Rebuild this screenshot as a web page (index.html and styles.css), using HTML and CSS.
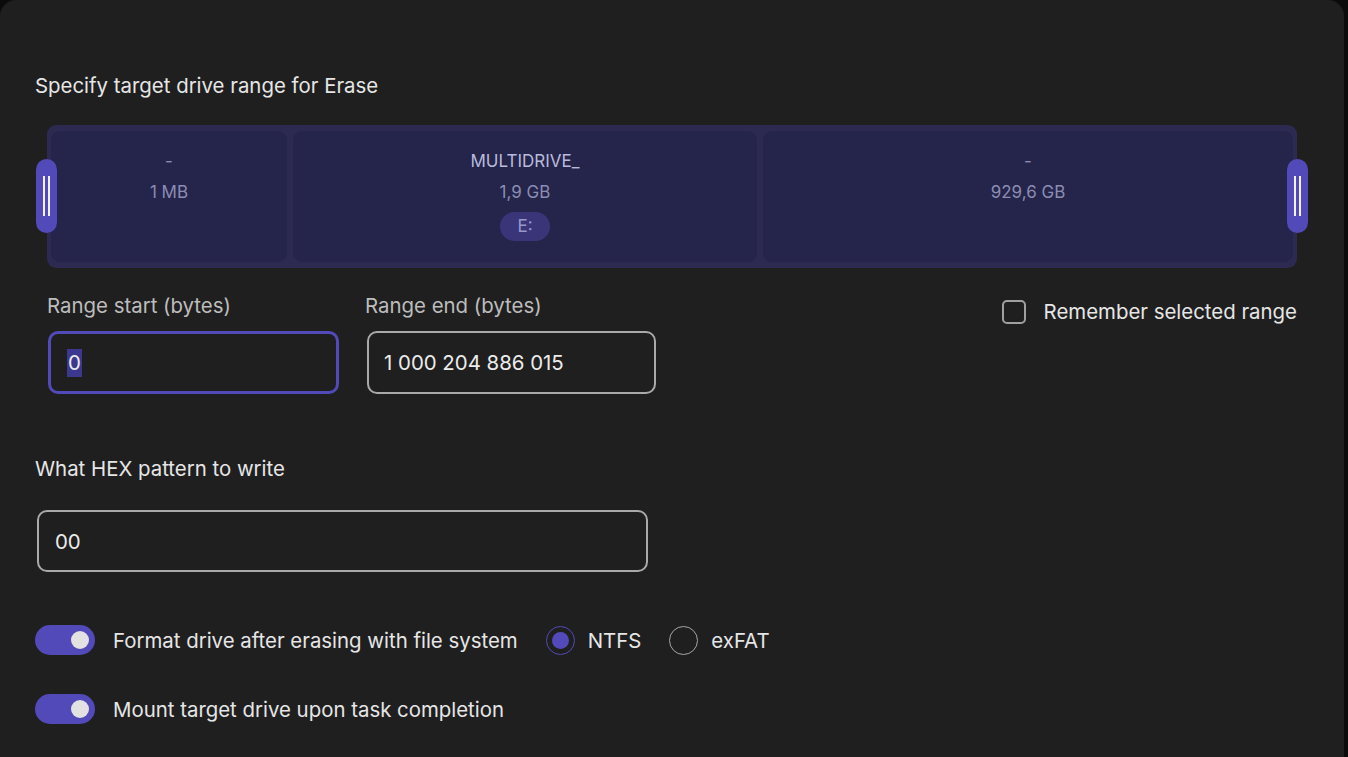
FILE: index.html
```html
<!DOCTYPE html>
<html>
<head>
<meta charset="utf-8">
<link rel="stylesheet" href="styles.css">
</head>
<body>
<div class="card">
  <h2 class="section-title">Specify target drive range for Erase</h2>

  <div class="drive-bar">
    <div class="segment seg-a">
      <div class="seg-name">-</div>
      <div class="seg-size">1 MB</div>
    </div>
    <div class="segment seg-b">
      <div class="seg-name light">MULTIDRIVE_</div>
      <div class="seg-size">1,9 GB</div>
      <div class="badge">E:</div>
    </div>
    <div class="segment seg-c">
      <div class="seg-name">-</div>
      <div class="seg-size">929,6 GB</div>
    </div>
    <div class="handle handle-left"><span></span><span></span></div>
    <div class="handle handle-right"><span></span><span></span></div>
  </div>

  <div class="range-row">
    <div class="field">
      <div class="field-label">Range start (bytes)</div>
      <div class="input input-focus"><span class="sel">0</span></div>
    </div>
    <div class="field field-end">
      <div class="field-label">Range end (bytes)</div>
      <div class="input">1 000 204 886 015</div>
    </div>
    <label class="remember">
      <span class="checkbox"></span>
      <span>Remember selected range</span>
    </label>
  </div>

  <h2 class="section-title hex-title">What HEX pattern to write</h2>
  <div class="input hex-input">00</div>

  <div class="option-row first">
    <span class="toggle"><span class="knob"></span></span>
    <span class="option-label">Format drive after erasing with file system</span>
    <span class="radio checked"><span class="dot"></span></span>
    <span class="radio-label">NTFS</span>
    <span class="radio"></span>
    <span class="radio-label">exFAT</span>
  </div>
  <div class="option-row second">
    <span class="toggle"><span class="knob"></span></span>
    <span class="option-label">Mount target drive upon task completion</span>
  </div>
</div>
</body>
</html>
```

FILE: styles.css
```css
* { box-sizing: border-box; }

html, body {
  margin: 0;
  padding: 0;
  background: #0b0b0b;
  height: 100%;
  overflow: hidden;
}

body {
  font-family: Inter, "Noto Sans", sans-serif;
  color: #e4e4e4;
}

.card {
  width: 1344px;
  height: 757px;
  background: #1f1f1f;
  border-radius: 16px 16px 0 0;
  padding: 74px 0 0 35px;
}

.section-title {
  margin: 0;
  font-size: 20.4px;
  font-weight: 400;
  line-height: 24px;
  color: #e6e6e6;
}

.drive-bar {
  position: relative;
  margin: 27px 0 0 12px;
  width: 1250px;
  height: 143px;
  background: #2c2a51;
  border-radius: 9px;
  padding: 6px 4px 6px 4px;
  display: flex;
  gap: 6px;
}

.segment {
  background: #25244a;
  border-radius: 9px;
  display: flex;
  flex-direction: column;
  align-items: center;
  padding-top: 20px;
  font-size: 17px;
  color: #8b8db3;
}

.seg-a { width: 236px; }
.seg-b { width: 464px; }
.seg-c { flex: 1; }

.seg-name, .seg-size {
  line-height: 20px;
}

.seg-size { margin-top: 11px; }

.seg-name.light { color: #b9bbdc; }

.badge {
  margin-top: 10px;
  height: 29px;
  padding: 0 17px;
  border-radius: 15px;
  background: #3a3579;
  color: #9799c9;
  line-height: 29px;
}

.handle {
  position: absolute;
  top: 34px;
  width: 21px;
  height: 74px;
  border-radius: 11px;
  background: #524ab9;
  display: flex;
  justify-content: center;
  align-items: center;
  gap: 3px;
}

.handle span {
  width: 2px;
  height: 40px;
  background: #f2f2ff;
}

.handle-left { left: -11px; }
.handle-right { right: -11px; }

.range-row {
  display: flex;
  align-items: flex-start;
  margin: 26px 0 0 12px;
  width: 1250px;
}

.field { display: flex; flex-direction: column; }

.field-end { margin-left: 26px; }

.field-label {
  font-size: 20.4px;
  line-height: 24px;
  color: #bdbdbd;
  margin-bottom: 13px;
}

.input {
  width: 291px;
  height: 63px;
  border: 2px solid #a9a9a9;
  border-radius: 10px;
  padding: 0 15px;
  display: flex;
  align-items: center;
  font-size: 20.4px;
  color: #ececec;
}

.field-end .input { margin-left: 2px; width: 289px; }

.input-focus {
  border: 3px solid #524ab9;
  margin-left: 1px;
  padding-left: 16px;
}

.sel {
  background: #3c3890;
  line-height: 28px;
  padding: 0 1px;
}

.remember {
  margin-left: auto;
  margin-top: 5px;
  display: flex;
  align-items: center;
  gap: 18px;
  font-size: 20.4px;
  color: #e6e6e6;
}

.checkbox {
  width: 24px;
  height: 24px;
  border: 2px solid #a0a0a0;
  border-radius: 5px;
}

.hex-title { margin-top: 63px; }

.hex-input {
  margin: 29px 0 0 2px;
  width: 611px;
  height: 62px;
  padding-left: 16px;
}

.option-row {
  display: flex;
  align-items: center;
  height: 30px;
  font-size: 20.4px;
  color: #e6e6e6;
}

.option-row.first { margin-top: 53px; }
.option-row.second { margin-top: 39px; }

.toggle {
  width: 60px;
  height: 30px;
  border-radius: 15px;
  background: #524ab9;
  display: flex;
  align-items: center;
  justify-content: flex-end;
  padding-right: 6px;
  margin-right: 18px;
}

.knob {
  width: 18px;
  height: 18px;
  border-radius: 50%;
  background: #e2e2e2;
}

.radio {
  width: 29px;
  height: 29px;
  border-radius: 50%;
  border: 1.5px solid #a6a6a6;
  display: flex;
  align-items: center;
  justify-content: center;
  margin-left: 28px;
}

.radio.checked { border-color: #524ab9; }

.dot {
  width: 17px;
  height: 17px;
  border-radius: 50%;
  background: #524ab9;
}

.radio-label { margin-left: 13px; }
```
